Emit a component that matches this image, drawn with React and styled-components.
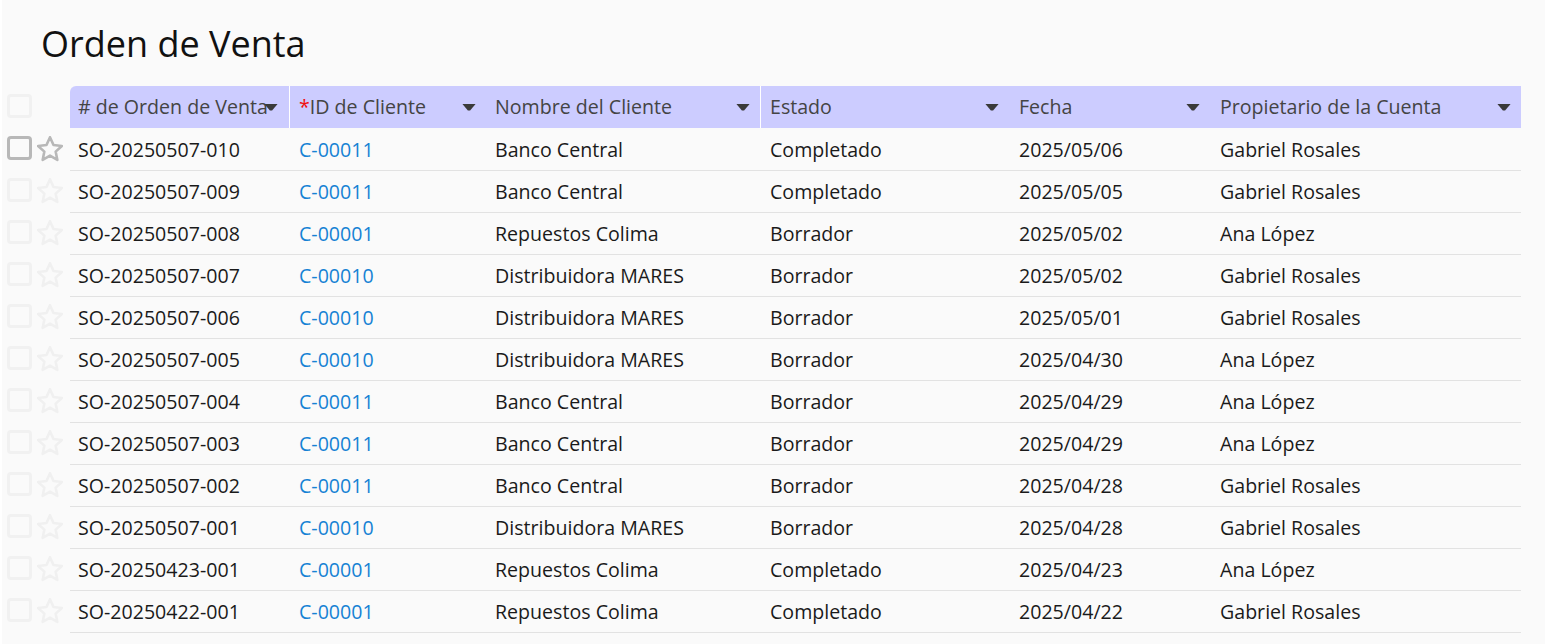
import React from "react";
import styled, { createGlobalStyle } from "styled-components";

const GlobalStyle = createGlobalStyle`
  html, body {
    margin: 0;
    padding: 0;
    height: 100%;
    overflow: hidden;
    background: #ffffff;
    font-family: "Open Sans", "Noto Sans", sans-serif;
  }
`;

const COLUMNS = "220px 195px 276px 249px 200px 311px";

const Page = styled.div`
  height: 644px;
  box-sizing: border-box;
  margin-left: 2px;
  padding-right: 24px;
  background: #fafafa;
`;

const Title = styled.h1`
  margin: 0;
  height: 86px;
  box-sizing: border-box;
  padding: 21px 0 0 39px;
  font-size: 36px;
  line-height: 46px;
  font-weight: 400;
  color: #111;
`;

const Line = styled.div`
  display: grid;
  grid-template-columns: 68px 1451px;
  height: 42px;
`;

const Rows = styled.div`
  padding-top: 1px;
`;

const Gutter = styled.div`
  display: flex;
  align-items: center;
  gap: 5px;
  padding-left: 5px;
`;

const Check = styled.span`
  display: block;
  box-sizing: border-box;
  width: 25px;
  height: 24px;
  border-radius: 4px;
  border: 3px solid ${props => (props.$active ? "#b8b8b8" : "#f1f1f1")};
  margin-top: ${props => (props.$head ? "-2px" : "-5px")};
`;

const Star = styled.svg`
  display: block;
  width: 26px;
  height: 26px;
  margin-top: -2px;
  fill: none;
  stroke: ${props => (props.$active ? "#b8b8b8" : "#f0f0f0")};
  stroke-width: 2.3;
  stroke-linejoin: round;
`;

const HeadRow = styled.div`
  display: grid;
  grid-template-columns: ${COLUMNS};
  background: #ccccff;
  border-top-left-radius: 6px;
`;

const HeadCell = styled.div`
  display: flex;
  align-items: center;
  justify-content: space-between;
  box-sizing: border-box;
  padding: 0 ${props => props.$right || 10}px 1px ${props => props.$left || 9}px;
  font-size: 19.6px;
  color: #444444;
  white-space: nowrap;
  border-right: ${props => (props.$divider ? "1px solid #fff" : "none")};
`;

const Required = styled.span`
  color: #f01010;
`;

const Caret = styled.span`
  flex: none;
  width: 14px;
  height: 7px;
  margin-top: 1px;
  background: #3a3a3a;
  clip-path: polygon(0 0, 100% 0, 58% 100%, 42% 100%);
  margin-left: ${props => (props.$overlap ? "-6px" : "0")};
`;

const BodyRow = styled.div`
  display: grid;
  grid-template-columns: ${COLUMNS};
  border-bottom: 1px solid #e2e2e2;
`;

const Cell = styled.div`
  display: flex;
  align-items: center;
  padding-left: ${props => props.$left || 9}px;
  padding-bottom: 1px;
  font-size: 19.6px;
  color: #1a1a1a;
  white-space: nowrap;
`;

const ClientLink = styled.a`
  color: #1682d4;
  text-decoration: none;
`;

const rows = [
  ["SO-20250507-010", "C-00011", "Banco Central", "Completado", "2025/05/06", "Gabriel Rosales"],
  ["SO-20250507-009", "C-00011", "Banco Central", "Completado", "2025/05/05", "Gabriel Rosales"],
  ["SO-20250507-008", "C-00001", "Repuestos Colima", "Borrador", "2025/05/02", "Ana López"],
  ["SO-20250507-007", "C-00010", "Distribuidora MARES", "Borrador", "2025/05/02", "Gabriel Rosales"],
  ["SO-20250507-006", "C-00010", "Distribuidora MARES", "Borrador", "2025/05/01", "Gabriel Rosales"],
  ["SO-20250507-005", "C-00010", "Distribuidora MARES", "Borrador", "2025/04/30", "Ana López"],
  ["SO-20250507-004", "C-00011", "Banco Central", "Borrador", "2025/04/29", "Ana López"],
  ["SO-20250507-003", "C-00011", "Banco Central", "Borrador", "2025/04/29", "Ana López"],
  ["SO-20250507-002", "C-00011", "Banco Central", "Borrador", "2025/04/28", "Gabriel Rosales"],
  ["SO-20250507-001", "C-00010", "Distribuidora MARES", "Borrador", "2025/04/28", "Gabriel Rosales"],
  ["SO-20250423-001", "C-00001", "Repuestos Colima", "Completado", "2025/04/23", "Ana López"],
  ["SO-20250422-001", "C-00001", "Repuestos Colima", "Completado", "2025/04/22", "Gabriel Rosales"]
];

function StarIcon({ active }) {
  return (
    <Star $active={active} viewBox="1.5 1.5 23 23">
      <path d="M13 2.6l3.1 6.9 7.4.8-5.5 5 1.5 7.4-6.5-3.8-6.5 3.8 1.5-7.4-5.5-5 7.4-.8z" />
    </Star>
  );
}

export default function App() {
  return (
    <Page>
      <GlobalStyle />
      <Title>Orden de Venta</Title>
      <Line>
        <Gutter>
          <Check $head />
        </Gutter>
        <HeadRow>
          <HeadCell $divider $left={8} $right={11}>
            # de Orden de Venta
            <Caret $overlap />
          </HeadCell>
          <HeadCell $right={9}>
            <span>
              <Required>*</Required>ID de Cliente
            </span>
            <Caret />
          </HeadCell>
          <HeadCell $divider $left={10} $right={10}>
            Nombre del Cliente
            <Caret />
          </HeadCell>
          <HeadCell $right={11}>
            Estado
            <Caret />
          </HeadCell>
          <HeadCell>
            Fecha
            <Caret />
          </HeadCell>
          <HeadCell $left={10}>
            Propietario de la Cuenta
            <Caret />
          </HeadCell>
        </HeadRow>
      </Line>
      <Rows>
        {rows.map((row, i) => (
          <Line key={row[0]}>
            <Gutter>
              <Check $active={i === 0} />
              <StarIcon active={i === 0} />
            </Gutter>
            <BodyRow>
              <Cell $left={8}>{row[0]}</Cell>
              <Cell>
                <ClientLink href="#">{row[1]}</ClientLink>
              </Cell>
              <Cell $left={10}>{row[2]}</Cell>
              <Cell>{row[3]}</Cell>
              <Cell>{row[4]}</Cell>
              <Cell $left={10}>{row[5]}</Cell>
            </BodyRow>
          </Line>
        ))}
      </Rows>
    </Page>
  );
}
